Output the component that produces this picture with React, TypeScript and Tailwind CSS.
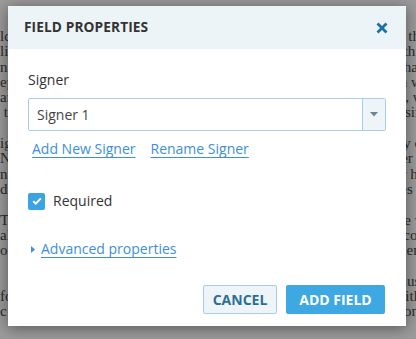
import { useState } from 'react';

const docLines = [
  'ld rights, prior agreements and any other documents with respect to the purpose hereof, pos',
  'lication of any of the foregoing, Recipient shall not disclose to any third party or use, that',
  'n connection with the Purpose, any Confidential Information, and shall keep in strict con-',
  'ep the same secret and not to copy or reproduce such information in whole or in part, conf',
  'ar other than in accordance with this Agreement. Recipient may not, without the prior ma',
  ' to any third party without the express written consent of the Disclosing Party, except sig',
  '',
  'ign its rights under this Agreement, or delegate its obligations to any other party and othe-',
  'N Neither Party shall be liable to the other for any damages, whether direct or indirect, oth',
  'nal agreement between the parties with respect to the subject matter hereof and is binding to',
  'de and may only be amended in writing signed by both of the Parties hereto, and not',
  '',
  'T This Agreement shall be governed by and construed in accordance with the laws of the State',
  'al and the parties hereby submit to the exclusive jurisdiction of the courts of such state, ne',
  'or any action or proceeding arising out of or relating to this Agreement and their obligations',
  '',
  '  Recipient acknowledges that any breach of this Agreement may cause irreparable harm, in',
  'fo to the Disclosing Party, and that the Disclosing Party shall be entitled to seek injunctive relie',
  'c performance, and such other relief as may be proper (including monetary dama',
];

export default function App() {
  const [required, setRequired] = useState(true);

  return (
    <div className="relative w-[416px] h-[339px] overflow-hidden bg-[#9b9b9b]">
      {/* Document behind the overlay */}
      <div
        className="pt-[29px] pl-0 text-[15px] leading-[15.3px] text-[#2a2a2a] whitespace-pre"
        style={{ fontFamily: '"Liberation Serif", serif' }}
      >
        {docLines.map((line, i) => (
          <div key={i} className="h-[15.3px]">
            {line}
          </div>
        ))}
      </div>

      {/* Modal */}
      <div
        className="absolute left-[8px] top-[6px] w-[398px] h-[320px] bg-white shadow-[0_2px_14px_rgba(0,0,0,0.45)] flex flex-col"
        style={{ fontFamily: '"Open Sans", sans-serif' }}
      >
        {/* Header */}
        <div className="h-[43px] bg-[#edf4f8] flex items-center justify-between pl-[16px] pr-[17px]">
          <h2 className="text-[13.7px] font-bold text-[#333333] tracking-[0.1px]">FIELD PROPERTIES</h2>
          <button className="text-[#1a72a8] cursor-pointer">
            <svg width="14" height="14" viewBox="0 0 14 14">
              <path d="M2.5 2.5 L11.5 11.5 M11.5 2.5 L2.5 11.5" stroke="currentColor" strokeWidth="2.8" strokeLinecap="butt" />
            </svg>
          </button>
        </div>

        {/* Body */}
        <div className="px-[20px] pt-[20px] flex flex-col">
          <label className="text-[14px] text-[#333333] leading-[22px]">Signer</label>

          <div className="mt-[7px] h-[33px] flex border border-[#a9cde8] rounded-[2px]">
            <div className="flex-1 flex items-center pl-[8px] text-[14px] text-[#444444]">Signer 1</div>
            <div className="w-[23px] border-l border-[#a9cde8] bg-[#eef5f9] flex items-center justify-center">
              <svg width="8" height="5" viewBox="0 0 8 5">
                <path d="M0 0 L8 0 L4 4.5 Z" fill="#6b8399" />
              </svg>
            </div>
          </div>

          <div className="mt-[6px] flex gap-[15px] pl-[4px] text-[14px] leading-[24px]">
            <a className="text-[#3d8fd8] underline underline-offset-[3px] decoration-[#3d8fd8] cursor-pointer">Add New Signer</a>
            <a className="text-[#3d8fd8] underline underline-offset-[3px] decoration-[#3d8fd8] cursor-pointer">Rename Signer</a>
          </div>

          <label className="mt-[29px] flex items-center gap-[8px] cursor-pointer">
            <span
              onClick={() => setRequired(!required)}
              className={`w-[17px] h-[17px] rounded-[2px] flex items-center justify-center ${required ? 'bg-[#3ba3e3]' : 'bg-white border border-[#a9cde8]'}`}
            >
              {required && (
                <svg width="10" height="8" viewBox="0 0 10 8">
                  <path d="M1.2 4.2 L3.8 6.6 L8.8 1.4" stroke="white" strokeWidth="2" fill="none" />
                </svg>
              )}
            </span>
            <span className="text-[14px] text-[#333333] leading-[22px]">Required</span>
          </label>

          <div className="mt-[26px] flex items-center gap-[6px] pl-[3px]">
            <svg width="4" height="7" viewBox="0 0 4 7">
              <path d="M0 0 L4 3.5 L0 7 Z" fill="#3d8fd8" />
            </svg>
            <a className="text-[14px] leading-[22px] text-[#3d8fd8] underline underline-offset-[3px] cursor-pointer">Advanced properties</a>
          </div>
        </div>

        {/* Footer */}
        <div className="mt-[25px] flex justify-end gap-[9px] pr-[21px]">
          <button className="w-[74px] h-[29px] bg-[#eef5f9] border border-[#a9cde8] rounded-[2px] text-[14px] font-bold text-[#2d6e99] cursor-pointer">
            CANCEL
          </button>
          <button className="w-[99px] h-[29px] bg-[#3da8e1] rounded-[2px] text-[14px] font-bold text-white cursor-pointer">
            ADD FIELD
          </button>
        </div>
      </div>
    </div>
  );
}
